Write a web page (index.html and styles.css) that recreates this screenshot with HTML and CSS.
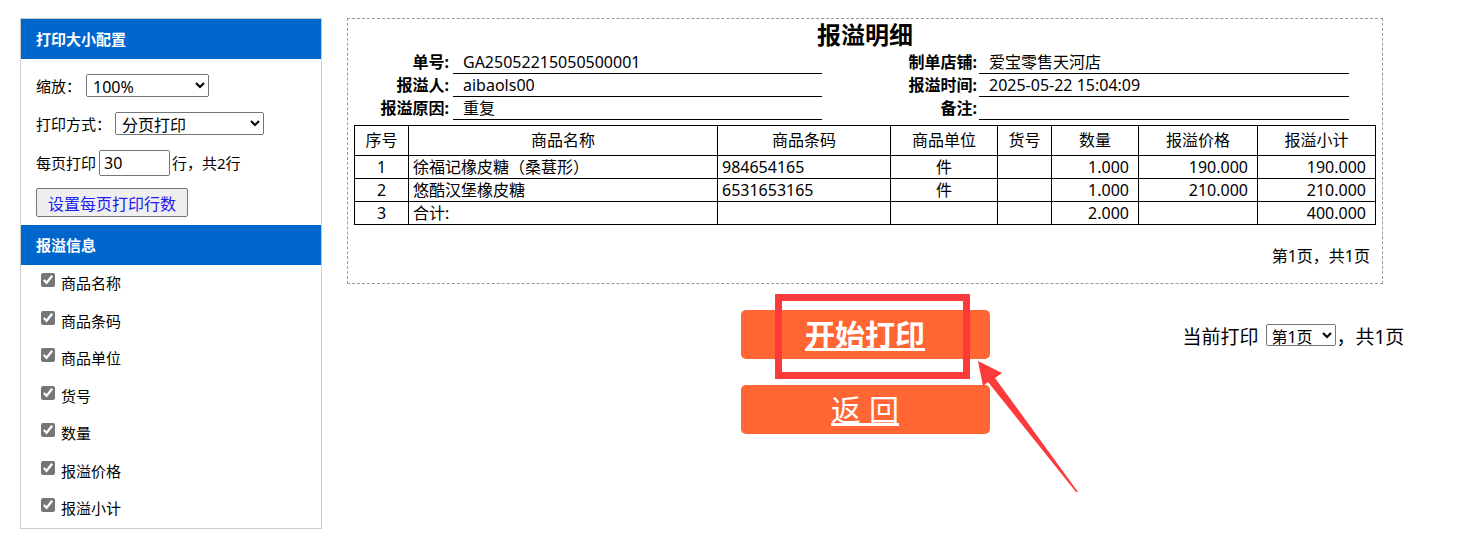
FILE: index.html
```html
<!doctype html>
<html>
<head>
<meta charset="utf-8">
<title>报溢明细打印</title>
<link rel="stylesheet" href="styles.css">
</head>

<body>
<div class="page">
	<div class="side">
		<div class="side-hd">打印大小配置</div>
		<div class="cfg">
			<div class="cfg-row">缩放：<select class="sel-zoom"><option>100%</option></select></div>
			<div class="cfg-row">打印方式：<select class="sel-mode"><option>分页打印</option></select></div>
			<div class="cfg-row">每页打印<input type="text" class="ipt-rows" value="30">行，共2行</div>
			<div class="cfg-row cfg-btn"><button class="btn-set">设置每页打印行数</button></div>
		</div>
		<div class="side-hd">报溢信息</div>
		<ul class="chk-list">
			<li><label><input type="checkbox" checked>商品名称</label></li>
			<li><label><input type="checkbox" checked>商品条码</label></li>
			<li><label><input type="checkbox" checked>商品单位</label></li>
			<li><label><input type="checkbox" checked>货号</label></li>
			<li><label><input type="checkbox" checked>数量</label></li>
			<li><label><input type="checkbox" checked>报溢价格</label></li>
			<li><label><input type="checkbox" checked>报溢小计</label></li>
		</ul>
	</div>

	<div class="main">
		<div class="sheet">
			<div class="sheet-title">报溢明细</div>
			<div class="info">
				<div class="field"><span class="lab">单号:</span><span class="val">GA25052215050500001</span></div>
				<div class="field field-r"><span class="lab">制单店铺:</span><span class="val">爱宝零售天河店</span></div>
				<div class="field"><span class="lab">报溢人:</span><span class="val">aibaols00</span></div>
				<div class="field field-r"><span class="lab">报溢时间:</span><span class="val">2025-05-22 15:04:09</span></div>
				<div class="field"><span class="lab">报溢原因:</span><span class="val">重复</span></div>
				<div class="field field-r"><span class="lab">备注:</span><span class="val"></span></div>
			</div>
			<table class="list">
				<colgroup>
					<col style="width:54px"><col style="width:309px"><col style="width:173px"><col style="width:107px">
					<col style="width:54px"><col style="width:87px"><col style="width:119px"><col style="width:118px">
				</colgroup>
				<tr><th>序号</th><th>商品名称</th><th>商品条码</th><th>商品单位</th><th>货号</th><th>数量</th><th>报溢价格</th><th>报溢小计</th></tr>
				<tr><td class="c">1</td><td class="l">徐福记橡皮糖（桑葚形）</td><td class="l">984654165</td><td class="c">件</td><td></td><td class="r">1.000</td><td class="r">190.000</td><td class="r">190.000</td></tr>
				<tr><td class="c">2</td><td class="l">悠酷汉堡橡皮糖</td><td class="l">6531653165</td><td class="c">件</td><td></td><td class="r">1.000</td><td class="r">210.000</td><td class="r">210.000</td></tr>
				<tr><td class="c">3</td><td class="l">合计:</td><td></td><td></td><td></td><td class="r">2.000</td><td></td><td class="r">400.000</td></tr>
			</table>
			<div class="page-no">第1页，共1页</div>
		</div>

		<div class="ops">
			<div></div>
			<div class="btns">
				<a href="javascript:;" class="btn btn-print">开始打印</a>
				<a href="javascript:;" class="btn">返 回</a>
			</div>
			<div class="cur">当前打印 <select class="sel-page"><option>第1页</option></select>，共1页</div>
		</div>
	</div>
</div>

<!-- 标注：红框和箭头 -->
<svg class="mark" width="1469" height="558" viewBox="0 0 1469 558">
	<rect x="778.5" y="297.5" width="188" height="78" fill="none" stroke="#fb3b3b" stroke-width="7"/>
	<polygon points="978,361 1002,373 995,378 1078,492 1076,492 988,382 983,386" fill="#fb3b3b"/>
</svg>
</body>
</html>
```

FILE: styles.css
```css
*{ box-sizing:border-box;}
body{ margin:0; font-family:"Noto Sans","Noto Sans CJK SC",sans-serif; font-size:16px; color:#000; background:#fff;}
select,input,button{ font-family:inherit;}

.page{ display:flex; align-items:flex-start; gap:25px; padding:18px 20px;}

/* 左侧配置 */
.side{ width:302px; border:1px solid #ccc;}
.side-hd{ height:40px; line-height:40px; padding-left:15px; background:#0066cc; color:#fff; font-size:15px; font-weight:bold;}
.cfg{ padding:15px 15px 8px; display:flex; flex-direction:column; gap:15px; font-size:15px;}
.cfg-row{ display:flex; align-items:center; line-height:20px; white-space:nowrap;}
.cfg-btn{ margin-top:-3px;}
.sel-zoom,.sel-mode{ height:23px; margin-left:5px; font-size:16px; padding:0 2px;}
.sel-zoom{ width:123px;}
.sel-mode{ width:149px; margin-left:4px;}
.ipt-rows{ width:71px; height:26px; margin:0 2px 0 3px; font-size:16px; padding:0 3px;}
.btn-set{ height:29px; width:152px; padding:0; font-size:16px; color:#2020ee; background:#efefef; border:1px solid #767676; border-radius:2px;}
.chk-list{ margin:0; padding:0; list-style:none; font-size:15px;}
.chk-list li{ height:37.5px; line-height:37.5px; padding-left:20px;}
.chk-list input{ width:14px; height:14px; margin:0 6px 0 0; vertical-align:2px; accent-color:#767676;}

/* 打印区 */
.main{ width:1036px;}
.sheet{ border:1px dashed #999; padding:0 6px 16px;}
.sheet-title{ text-align:center; font-size:24px; font-weight:bold; line-height:32px;}
.info{ display:grid; grid-template-columns:511px 1fr;}
.field{ display:flex; line-height:22px;}
.field .lab{ width:99px; padding-right:4px; text-align:right; font-weight:bold;}
.field .val{ width:369px; border-bottom:1px solid #000; padding-left:10px;}
.field-r .lab{ width:114px; padding-right:2px;}
.field-r .val{ width:370px;}

.list{ width:100%; margin-top:5px; border-collapse:collapse; table-layout:fixed;}
.list th,.list td{ border:1px solid #000; padding:0; white-space:nowrap; overflow:hidden;}
.list th{ font-weight:normal; line-height:29px; text-align:center;}
.list td{ line-height:22px;}
.list .c{ text-align:center;}
.list .l{ padding-left:4px;}
.list .r{ text-align:right; padding-right:9px;}
.page-no{ margin-top:20px; line-height:22px; text-align:right; padding-right:6px;}

/* 按钮 */
.ops{ display:grid; grid-template-columns:minmax(0,1fr) 249px minmax(0,1fr); margin-top:26px;}
.btns{ display:flex; flex-direction:column; gap:26px;}
.btn{ display:block; height:49px; line-height:49px; text-align:center; background:#ff6633; color:#fff; font-size:30px; border-radius:5px; text-decoration:underline;}
.btn-print{ font-weight:bold;}
.cur{ padding:3px 0 0 193px; line-height:49px; font-size:19px; white-space:nowrap;}
.sel-page{ width:70px; height:22px; margin-left:3px; font-size:16px; padding:0; vertical-align:1px;}

.mark{ position:absolute; left:0; top:0; pointer-events:none;}
```
